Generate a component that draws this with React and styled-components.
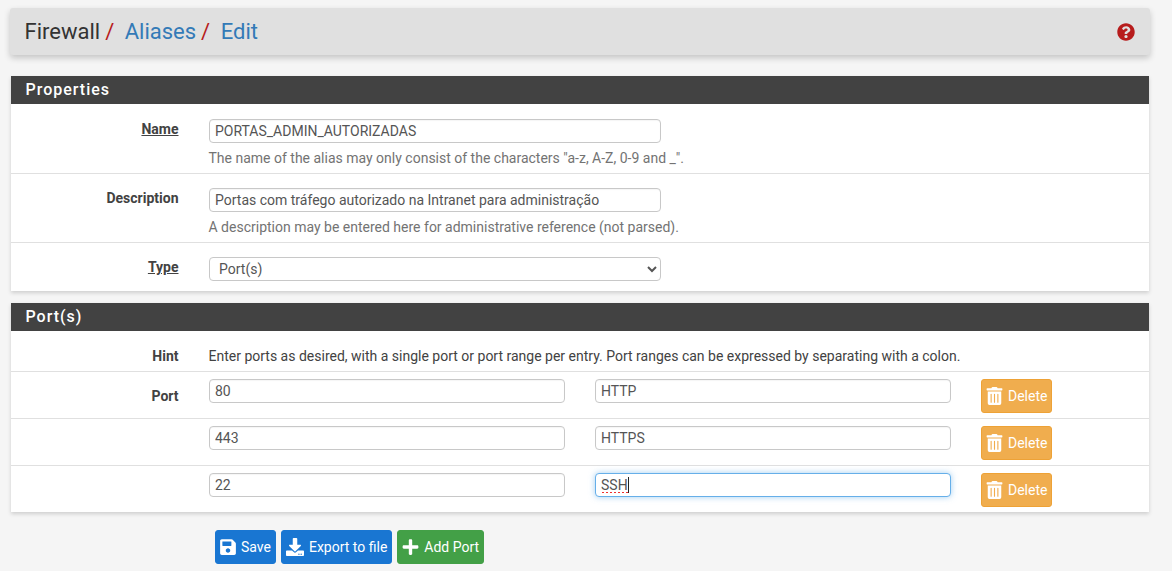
import React from 'react';
import styled, { createGlobalStyle } from 'styled-components';
import { FaTrashAlt, FaSave, FaDownload, FaPlus, FaQuestionCircle } from 'react-icons/fa';

const GlobalStyle = createGlobalStyle`
    html, body {
        margin: 0;
        padding: 0;
        height: 571px;
        overflow: hidden;
        background-color: #f5f5f5;
        font-family: Roboto, "Liberation Sans", sans-serif;
        font-size: 14px;
        color: #424242;
    }
    * { box-sizing: border-box; }
`;

const Page = styled.div`
    width: 1172px;
    padding: 8px 22px 0 10px;
`;

const Breadcrumb = styled.div`
    height: 47px;
    background-color: #e0e0e0;
    border-radius: 3px;
    box-shadow: 0 3px 6px rgba(0, 0, 0, 0.2);
    display: flex;
    align-items: center;
    justify-content: space-between;
    padding: 0 15px;
    margin-bottom: 21px;
    font-size: 22px;
`;

const Crumbs = styled.div`
    display: flex;
    align-items: center;
    margin-left: -0.5px;
`;

const Crumb = styled.span`
    color: ${p => (p.$link ? '#337ab7' : '#333333')};
`;

const Slash = styled.span`
    color: #b71c1c;
    margin: 0 10.5px 0 5px;
`;

const Help = styled.span`
    display: flex;
    color: #b71c1c;
    font-size: 18px;
`;

const Panel = styled.section`
    margin: 0 1px 12px;
    background-color: #fff;
    box-shadow: 0 2px 4px rgba(0, 0, 0, 0.16);
`;

const PanelTitle = styled.h2`
    margin: 0;
    height: 29px;
    padding: 0 14.5px;
    background-color: #424242;
    color: #fff;
    font-size: 16px;
    font-weight: 500;
    letter-spacing: 1px;
    line-height: 27px;
    border-bottom: 1px solid #fff;
`;

const Row = styled.div`
    display: grid;
    grid-template-columns: 168px 1fr;
    column-gap: 30px;
    height: ${p => p.$height}px;
    padding-top: ${p => p.$top}px;
    border-top: ${p => (p.$first ? 'none' : '1px solid #e0e0e0')};
`;

const Label = styled.div`
    padding-top: ${p => p.$top || 0}px;
    padding-right: 0.5px;
    text-align: right;
    font-weight: 700;
    font-size: 14px;
    line-height: 20px;
`;

const Required = styled.span`
    text-decoration: underline;
`;

const Input = styled.input`
    display: block;
    width: ${p => p.$width}px;
    height: 24px;
    padding: 0 5px;
    border: 1px solid ${p => (p.$focus ? '#66afe9' : '#c8c8c8')};
    border-radius: 4px;
    background: #fff;
    color: #555;
    font: 14px Roboto, sans-serif;
    outline: none;
    box-shadow: ${p => (p.$focus ? '0 0 6px rgba(102, 175, 233, 0.6)' : 'inset 0 1px 1px rgba(0, 0, 0, 0.04)')};
`;

const Select = styled.select`
    display: block;
    width: 452px;
    height: 24px;
    padding: 0 5px;
    border: 1px solid #c8c8c8;
    border-radius: 4px;
    background: #fff;
    color: #555;
    font: 14px Roboto, sans-serif;
`;

const FieldNote = styled.div`
    margin: 5px 0 0 -0.5px;
    color: #737373;
    font-size: 14px;
    line-height: 20px;
`;

const HintText = styled.div`
    margin-left: -0.5px;
    font-size: 14px;
    line-height: 20px;
    color: #424242;
`;

const PortCells = styled.div`
    display: flex;
    gap: 30px;
    align-items: flex-start;
`;

const FocusField = styled.div`
    position: relative;
`;

// spell-check squiggle under the word being typed
const Squiggle = styled.span`
    position: absolute;
    left: 7px;
    top: 19px;
    width: 26px;
    height: 1px;
    background-image: repeating-linear-gradient(90deg, #f03030 0 2px, transparent 2px 4px);
`;

const Caret = styled.span`
    position: absolute;
    left: 33px;
    top: 4px;
    width: 1px;
    height: 16px;
    background-color: #222;
`;

const Button = styled.button`
    display: inline-flex;
    align-items: center;
    gap: 5px;
    height: 34px;
    padding: 0 4px;
    border: 1px solid ${p => p.$border};
    border-radius: 3px;
    background-color: ${p => p.$bg};
    color: #fff;
    font: 14px Roboto, sans-serif;
    svg {
        width: ${p => p.$iconWidth || 16}px;
        height: 18px;
    }
`;

const Actions = styled.div`
    display: flex;
    gap: 5px;
    padding: 6px 0 0 205px;
`;

const ports = [
    { port: '80', name: 'HTTP' },
    { port: '443', name: 'HTTPS' },
    { port: '22', name: 'SSH', focus: true },
];

const App = () => (
    <Page>
        <GlobalStyle />
        <Breadcrumb>
            <Crumbs>
                <Crumb>Firewall</Crumb><Slash>/</Slash>
                <Crumb $link>Aliases</Crumb><Slash>/</Slash>
                <Crumb $link>Edit</Crumb>
            </Crumbs>
            <Help><FaQuestionCircle /></Help>
        </Breadcrumb>

        <Panel>
            <PanelTitle>Properties</PanelTitle>
            <Row $first $height={68} $top={14}>
                <Label><Required>Name</Required></Label>
                <div>
                    <Input $width={452} defaultValue="PORTAS_ADMIN_AUTORIZADAS" />
                    <FieldNote>The name of the alias may only consist of the characters "a-z, A-Z, 0-9 and _".</FieldNote>
                </div>
            </Row>
            <Row $height={69} $top={14}>
                <Label>Description</Label>
                <div>
                    <Input $width={452} defaultValue="Portas com tráfego autorizado na Intranet para administração" />
                    <FieldNote>A description may be entered here for administrative reference (not parsed).</FieldNote>
                </div>
            </Row>
            <Row $height={49} $top={14}>
                <Label><Required>Type</Required></Label>
                <Select defaultValue="port"><option value="port">Port(s)</option></Select>
            </Row>
        </Panel>

        <Panel>
            <PanelTitle>Port(s)</PanelTitle>
            <Row $first $height={39} $top={14}>
                <Label>Hint</Label>
                <HintText>Enter ports as desired, with a single port or port range per entry. Port ranges can be expressed by separating with a colon.</HintText>
            </Row>
            {ports.map((row, i) => (
                <Row key={row.port} $height={47} $top={7}>
                    <Label $top={7}>{i === 0 ? 'Port' : ''}</Label>
                    <PortCells>
                        <Input $width={356} defaultValue={row.port} />
                        <FocusField>
                            <Input $width={356} $focus={row.focus} defaultValue={row.name} />
                            {row.focus && <><Squiggle /><Caret /></>}
                        </FocusField>
                        <Button $bg="#f0ad4e" $border="#eea236" $iconWidth={17}><FaTrashAlt />Delete</Button>
                    </PortCells>
                </Row>
            ))}
        </Panel>

        <Actions>
            <Button $bg="#1976d2" $border="#1976d2"><FaSave />Save</Button>
            <Button $bg="#1976d2" $border="#1976d2" $iconWidth={18}><FaDownload />Export to file</Button>
            <Button $bg="#43a047" $border="#43a047" $iconWidth={17}><FaPlus />Add Port</Button>
        </Actions>
    </Page>
);

export default App;
